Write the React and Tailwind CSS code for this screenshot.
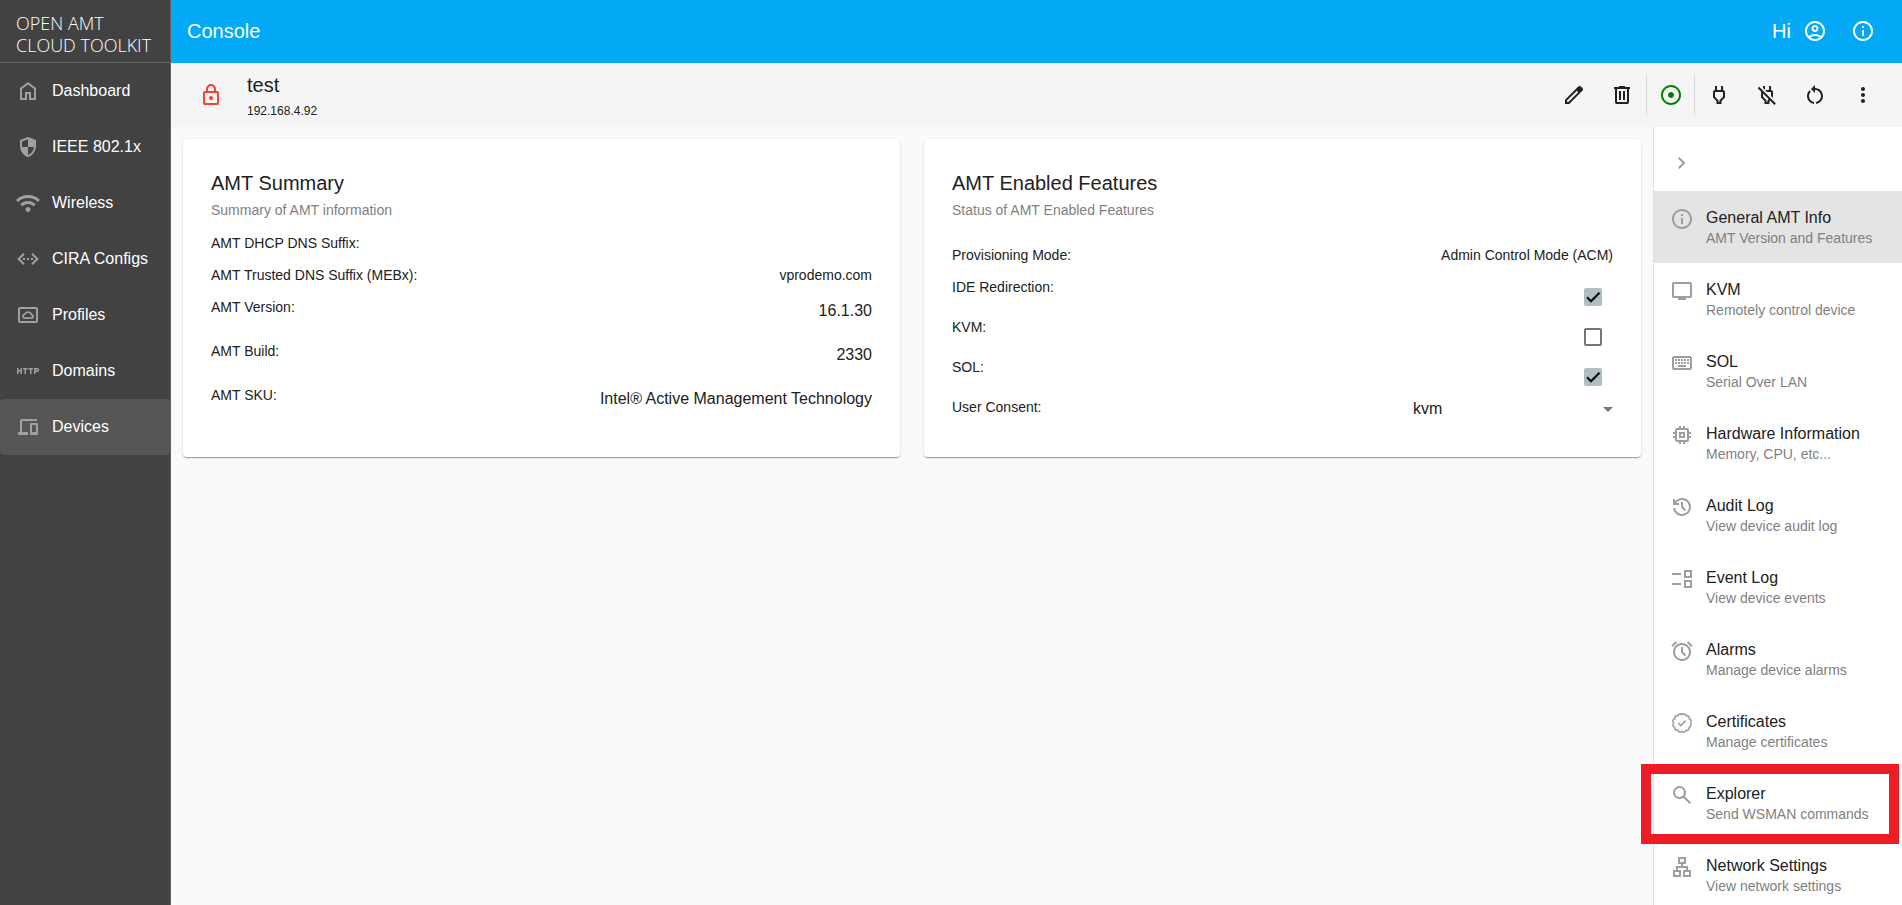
import { useState } from "react";
import {
  MdOutlineInfo,
  MdOutlineAccountCircle,
  MdOutlineKeyboard,
  MdMemory,
  MdOutlineLan,
  MdAdjust,
  MdOutlinePower,
  MdOutlinePowerOff,
  MdRestartAlt,
  MdMoreVert,
} from "react-icons/md";

function symbol(d) {
  return function Symbol(props) {
    return (
      <svg viewBox="0 -960 960 960" fill="currentColor" aria-hidden="true" {...props}>
        <path d={d} />
      </svg>
    );
  };
}

const HomeIcon = symbol(
  "M240-200h120v-240h240v240h120v-360L480-740 240-560v360Zm-80 80v-480l320-240 320 240v480H520v-240h-80v240H160Z"
);
const ShieldIcon = symbol(
  "M480-80q-139-35-229.5-159.5T160-516v-244l320-120 320 120v244q0 152-90.5 276.5T480-80Zm0-84q97-30 162-118.5T718-480H480v-315l-240 90v207q0 7 2 18h238v316Z"
);
const WifiIcon = symbol(
  "M480-120q-42 0-71-29t-29-71q0-42 29-71t71-29q42 0 71 29t29 71q0 42-29 71t-71 29ZM254-346l-84-86q59-59 138.5-93.5T480-560q92 0 171.5 35T790-430l-84 84q-44-44-102-69t-124-25q-66 0-124 25t-102 69ZM84-516 0-600q92-94 215-147t265-53q142 0 265 53t215 147l-84 84q-77-77-178.5-120.5T480-680q-116 0-217.5 43.5T84-516Z"
);
const HttpIcon = symbol(
  "M40-360v-240h60v80h80v-80h60v240h-60v-100h-80v100H40Zm300 0v-180h-60v-60h180v60h-60v180h-60Zm220 0v-180h-60v-60h180v60h-60v180h-60Zm160 0v-240h140q24 0 42 18t18 42v40q0 24-18 42t-42 18h-80v80h-60Zm60-140h80v-40h-80v40Z"
);
const DevicesIcon = symbol(
  "M80-160v-120h80v-440q0-33 23.5-56.5T240-800h600v80H240v440h240v120H80Zm520 0q-17 0-28.5-11.5T560-200v-400q0-17 11.5-28.5T600-640h240q17 0 28.5 11.5T880-600v400q0 17-11.5 28.5T840-160H600Zm40-120h160v-280H640v280Z"
);
const TvIcon = symbol(
  "M320-120v-80H160q-33 0-56.5-23.5T80-280v-480q0-33 23.5-56.5T160-840h640q33 0 56.5 23.5T880-760v480q0 33-23.5 56.5T800-200H640v80H320ZM160-280h640v-480H160v480Z"
);
const HistoryIcon = symbol(
  "M480-120q-138 0-240.5-91.5T122-440h82q14 104 92.5 172T480-200q117 0 198.5-81.5T760-480q0-117-81.5-198.5T480-760q-69 0-129 32t-101 88h110v80H120v-240h80v94q51-64 124.5-99T480-840q75 0 140.5 28.5t114 77q48.5 48.5 77 114T840-480q0 75-28.5 140.5t-77 114q-48.5 48.5-114 77T480-120Zm112-192L440-464v-216h80v184l128 128-56 56Z"
);
const AlarmIcon = symbol(
  "M480-80q-75 0-140.5-28.5t-114-77q-48.5-48.5-77-114T120-440q0-75 28.5-140.5t77-114q48.5-48.5 114-77T480-800q75 0 140.5 28.5t114 77q48.5 48.5 77 114T840-440q0 75-28.5 140.5t-77 114q-48.5 48.5-114 77T480-80Zm112-192 56-56-128-128v-184h-80v216l152 152ZM224-866l56 56-170 170-56-56 170-170Zm512 0 170 170-56 56-170-170 56-56ZM480-160q117 0 198.5-81.5T760-440q0-117-81.5-198.5T480-720q-117 0-198.5 81.5T200-440q0 117 81.5 198.5T480-160Z"
);
const SearchIcon = symbol(
  "M784-120 532-372q-30 24-69 38t-83 14q-109 0-184.5-75.5T120-580q0-109 75.5-184.5T380-840q109 0 184.5 75.5T640-580q0 44-14 83t-38 69l252 252-56 56ZM380-400q75 0 127.5-52.5T560-580q0-75-52.5-127.5T380-760q-75 0-127.5 52.5T200-580q0 75 52.5 127.5T380-400Z"
);
const EditIcon = symbol(
  "M200-200h57l391-391-57-57-391 391v57Zm-80 80v-170l528-527q12-11 26.5-17t30.5-6q16 0 31 6t26 18l55 56q12 11 17.5 26t5.5 30q0 16-5.5 30.5T817-647L290-120H120Z"
);
const DeleteIcon = symbol(
  "M280-120q-33 0-56.5-23.5T200-200v-520h-40v-80h200v-40h240v40h200v80h-40v520q0 33-23.5 56.5T680-120H280Zm400-600H280v520h400v-520ZM360-280h80v-360h-80v360Zm160 0h80v-360h-80v360Z"
);
const LockIcon = symbol(
  "M240-80q-33 0-56.5-23.5T160-160v-400q0-33 23.5-56.5T240-640h40v-80q0-83 58.5-141.5T480-920q83 0 141.5 58.5T680-720v80h40q33 0 56.5 23.5T800-560v400q0 33-23.5 56.5T720-80H240Zm0-80h480v-400H240v400Zm240-120q33 0 56.5-23.5T560-360q0-33-23.5-56.5T480-440q-33 0-56.5 23.5T400-360q0 33 23.5 56.5T480-280ZM360-640h240v-80q0-50-35-85t-85-35q-50 0-85 35t-35 85v80Z"
);
const ChevronRightIcon = symbol("M504-480 320-664l56-56 240 240-240 240-56-56 184-184Z");

function outline(children) {
  return function Outline(props) {
    return (
      <svg viewBox="0 0 24 24" fill="none" stroke="currentColor" strokeWidth="2" aria-hidden="true" {...props}>
        {children}
      </svg>
    );
  };
}

const EthernetIcon = outline(
  <>
    <path d="M8 6.700 2.700 12 8 17.300M16 6.700l5.300 5.300-5.300 5.300" />
    <path d="M7 12h2M11 12h2M15 12h2" />
  </>
);
const ProfilesIcon = outline(
  <>
    <rect x="3" y="5" width="18" height="14" rx="1" />
    <path d="M9 15.200h6.300a1.700 1.700 0 0 0 .2-3.400A3.600 3.600 0 0 0 8.800 11.200 2 2 0 0 0 9 15.200z" strokeWidth="1.700" />
  </>
);
const EventListIcon = outline(<path d="M2 7h9M2 17h9M15 4h6v6h-6zM15 14h6v6h-6z" />);

const scallops = Array.from({ length: 13 }, (_, i) => {
  const angle = (i * Math.PI) / 6;
  const point = `${(12 + 8.3 * Math.cos(angle)).toFixed(2)} ${(12 + 8.3 * Math.sin(angle)).toFixed(2)}`;
  return i === 0 ? `M${point}` : `A2.400 2.400 0 0 1 ${point}`;
}).join("");
const CertificateIcon = outline(
  <>
    <path d={scallops} strokeWidth="1.600" strokeLinejoin="round" />
    <path d="M8.400 12.100l2.400 2.400 4.800-4.800" strokeWidth="1.700" />
  </>
);

const navItems = [
  { label: "Dashboard", Icon: HomeIcon },
  { label: "IEEE 802.1x", Icon: ShieldIcon },
  { label: "Wireless", Icon: WifiIcon },
  { label: "CIRA Configs", Icon: EthernetIcon },
  { label: "Profiles", Icon: ProfilesIcon },
  { label: "Domains", Icon: HttpIcon },
  { label: "Devices", Icon: DevicesIcon, active: true },
];

const categories = [
  { title: "General AMT Info", note: "AMT Version and Features", Icon: MdOutlineInfo, active: true },
  { title: "KVM", note: "Remotely control device", Icon: TvIcon },
  { title: "SOL", note: "Serial Over LAN", Icon: MdOutlineKeyboard },
  { title: "Hardware Information", note: "Memory, CPU, etc...", Icon: MdMemory },
  { title: "Audit Log", note: "View device audit log", Icon: HistoryIcon },
  { title: "Event Log", note: "View device events", Icon: EventListIcon },
  { title: "Alarms", note: "Manage device alarms", Icon: AlarmIcon },
  { title: "Certificates", note: "Manage certificates", Icon: CertificateIcon },
  { title: "Explorer", note: "Send WSMAN commands", Icon: SearchIcon, highlighted: true },
  { title: "Network Settings", note: "View network settings", Icon: MdOutlineLan },
];

function Sidebar() {
  return (
    <aside className="flex w-[171px] shrink-0 flex-col border-r border-[#616161] bg-[#424242] text-white">
      <div className="h-[63px] border-b border-[#616161] px-4 pt-3 font-['Open_Sans',sans-serif] text-lg leading-[22px] font-light whitespace-nowrap">
        OPEN AMT
        <br />
        CLOUD TOOLKIT
      </div>
      <nav>
        {navItems.map(({ label, Icon, active }) => (
          <a
            key={label}
            href="#"
            className={`flex h-14 items-center gap-3 rounded px-4 text-base ${active ? "bg-[#555555]" : ""}`}
          >
            <Icon className="size-6 shrink-0 text-[#a0a0a0]" />
            {label}
          </a>
        ))}
      </nav>
    </aside>
  );
}

function IconButton({ label, Icon, className = "w-12" }) {
  return (
    <button type="button" aria-label={label} className={`grid h-12 place-items-center ${className}`}>
      <Icon className="size-6" />
    </button>
  );
}

function Header() {
  return (
    <header className="flex h-[63px] shrink-0 items-center bg-[#03a9f4] pr-[15px] pb-px pl-4 text-xl text-white">
      <h1 className="flex-1">Console</h1>
      <span>Hi</span>
      <IconButton label="Account" Icon={MdOutlineAccountCircle} />
      <IconButton label="About" Icon={MdOutlineInfo} />
    </header>
  );
}

function DeviceToolbar() {
  return (
    <div className="flex h-16 shrink-0 items-center bg-[#f5f5f5] pr-[15px] pl-4">
      <IconButton label="TLS status" Icon={LockIcon} className="w-12 text-[#f44336]" />
      <div className="ml-3 flex-1 pt-0.5">
        <h2 className="text-xl leading-7">test</h2>
        <p className="mt-0.5 text-xs leading-5">192.168.4.92</p>
      </div>
      <IconButton label="Edit" Icon={EditIcon} />
      <IconButton label="Delete" Icon={DeleteIcon} />
      <div className="flex h-10 items-center border-x border-[#d4d4d4]">
        <IconButton label="Power state" Icon={MdAdjust} className="w-[47px] text-[#008000]" />
      </div>
      <IconButton label="Power up" Icon={MdOutlinePower} />
      <IconButton label="Power down" Icon={MdOutlinePowerOff} />
      <IconButton label="Reset" Icon={MdRestartAlt} />
      <IconButton label="More actions" Icon={MdMoreVert} />
    </div>
  );
}

function Card({ title, subtitle, children }) {
  return (
    <section className="rounded bg-white p-7 shadow-[0_2px_1px_-1px_rgba(0,0,0,0.2),0_1px_1px_0_rgba(0,0,0,0.14),0_1px_3px_0_rgba(0,0,0,0.12)]">
      <h3 className="text-xl leading-8">{title}</h3>
      <p className="text-sm leading-[22px] text-[#7f7f7f]">{subtitle}</p>
      {children}
    </section>
  );
}

function SummaryCard() {
  return (
    <Card title="AMT Summary" subtitle="Summary of AMT information">
      <dl className="mt-1.5">
        <div className="flex h-8 justify-between py-1.5 text-sm">
          <dt>AMT DHCP DNS Suffix:</dt>
          <dd />
        </div>
        <div className="flex h-8 justify-between py-1.5 text-sm">
          <dt>AMT Trusted DNS Suffix (MEBx):</dt>
          <dd>vprodemo.com</dd>
        </div>
        {[
          ["AMT Version:", "16.1.30"],
          ["AMT Build:", "2330"],
          ["AMT SKU:", "Intel® Active Management Technology"],
        ].map(([name, value]) => (
          <div key={name} className="flex h-11 justify-between py-1.5">
            <dt className="text-sm">{name}</dt>
            <dd className="text-base leading-7">{value}</dd>
          </div>
        ))}
      </dl>
    </Card>
  );
}

function FeatureCheckbox({ id, label, initial }) {
  const [checked, setChecked] = useState(initial);
  return (
    <div className="flex h-10 items-start justify-between pt-1.5">
      <label htmlFor={id} className="text-sm">
        {label}
      </label>
      <span className="mt-[11px] mr-[11px] grid size-[18px]">
        <input
          id={id}
          type="checkbox"
          checked={checked}
          onChange={(e) => setChecked(e.target.checked)}
          className="col-start-1 row-start-1 size-[18px] appearance-none rounded-xs border-2 border-[#757575] checked:border-[#b0bec5] checked:bg-[#b0bec5]"
        />
        {checked && (
          <svg
            viewBox="0 0 18 18"
            fill="none"
            stroke="black"
            strokeWidth="2"
            className="pointer-events-none col-start-1 row-start-1 size-[18px]"
            aria-hidden="true"
          >
            <path d="M3 9.300l4 4 8.500-8.600" />
          </svg>
        )}
      </span>
    </div>
  );
}

function FeaturesCard() {
  return (
    <Card title="AMT Enabled Features" subtitle="Status of AMT Enabled Features">
      <div className="mt-[18px] flex h-8 justify-between py-1.5 text-sm">
        <span>Provisioning Mode:</span>
        <span>Admin Control Mode (ACM)</span>
      </div>
      <FeatureCheckbox id="ider" label="IDE Redirection:" initial={true} />
      <FeatureCheckbox id="kvm" label="KVM:" initial={false} />
      <FeatureCheckbox id="sol" label="SOL:" initial={true} />
      <div className="flex h-[38px] items-start justify-between pt-1.5">
        <label htmlFor="consent" className="text-sm">
          User Consent:
        </label>
        <span className="grid w-[200px] items-center">
          <select
            id="consent"
            defaultValue="kvm"
            className="col-start-1 row-start-1 h-6 w-full appearance-none bg-transparent text-base"
          >
            <option value="none">none</option>
            <option value="kvm">kvm</option>
            <option value="all">all</option>
          </select>
          <svg
            viewBox="0 0 10 5"
            className="pointer-events-none col-start-1 row-start-1 h-[5px] w-2.5 justify-self-end text-[#757575]"
            fill="currentColor"
            aria-hidden="true"
          >
            <path d="M0 0h10L5 5z" />
          </svg>
        </span>
      </div>
    </Card>
  );
}

function CategoryPanel() {
  return (
    <aside className="w-[249px] shrink-0 border-l border-[#e0e0e0] bg-white pt-2">
      <button type="button" aria-label="Collapse panel" className="flex h-14 w-full items-center px-4 text-[#9e9e9e]">
        <ChevronRightIcon className="size-6" />
      </button>
      <nav>
        {categories.map(({ title, note, Icon, active, highlighted }) => (
          <a
            key={title}
            href="#"
            className={`relative flex h-[72px] gap-3 px-4 pt-4 whitespace-nowrap ${active ? "bg-[#e4e4e4]" : ""}`}
          >
            <Icon className="size-6 shrink-0 text-[#9e9e9e]" />
            <span>
              <span className="block text-base leading-[22px]">{title}</span>
              <span className="block text-sm leading-[18px] text-[#7f7f7f]">{note}</span>
            </span>
            {highlighted && (
              <span className="absolute -top-[3px] right-[3px] -bottom-[5px] -left-[13px] z-10 border-[10px] border-[#ee1c25]" />
            )}
          </a>
        ))}
      </nav>
    </aside>
  );
}

export default function App() {
  return (
    <div className="flex h-screen overflow-hidden bg-[#fafafa] font-['Liberation_Sans',Arial,sans-serif] text-[#212121]">
      <Sidebar />
      <div className="flex min-w-0 flex-1 flex-col">
        <Header />
        <DeviceToolbar />
        <div className="flex min-h-0 flex-1">
          <main className="grid flex-1 grid-cols-2 content-start gap-6 p-3">
            <SummaryCard />
            <FeaturesCard />
          </main>
          <CategoryPanel />
        </div>
      </div>
    </div>
  );
}
